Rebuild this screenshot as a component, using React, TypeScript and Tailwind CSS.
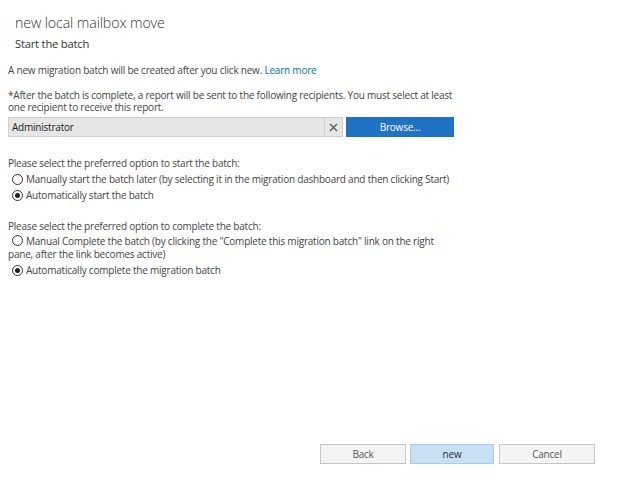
import React from "react";

const font = { fontFamily: '"Open Sans", "Noto Sans", sans-serif' };

function Radio({ checked }: { checked: boolean }) {
    return (
        <span className="inline-flex h-[11px] w-[11px] shrink-0 items-center justify-center rounded-full border border-[#333] bg-white">
            {checked && <span className="h-[5px] w-[5px] rounded-full bg-[#222]"/>}
        </span>
    );
}

export default function App() {
    return (
        <div style={font} className="flex h-[482px] w-[619px] flex-col bg-white text-[10px] tracking-[-0.22px] text-[#444]">
            {/* Header */}
            <div className="px-[15px] pt-[12px]">
                <div className="text-[14.2px] font-light leading-[22px] tracking-[-0.1px] text-[#333]">new local mailbox move</div>
                <div className="mt-[1px] text-[11.2px] leading-[18px] tracking-[-0.2px] text-[#333]">Start the batch</div>
            </div>

            <div className="px-[8px] pt-[10px]">
                <p className="leading-[14px]">
                    A new migration batch will be created after you click new.{" "}
                    <span className="text-[#0072c6]">Learn more</span>
                </p>

                <p className="mt-[12px] w-[445px] leading-[12px]">
                    *After the batch is complete, a report will be sent to the following recipients. You must select at least one recipient to receive this report.
                </p>

                {/* Recipient picker */}
                <div className="mt-[4px] flex h-[20px] items-stretch">
                    <div className="flex w-[335px] items-stretch border border-[#cfcfcf] bg-[#e6e6e6]">
                        <span className="flex flex-1 items-center pl-[3px] text-[#222]">Administrator</span>
                        <span className="flex w-[18px] items-center justify-center border-l border-[#cfcfcf] text-[#555]">
                            <svg width="9" height="9" viewBox="0 0 9 9">
                                <path d="M1 1L8 8M8 1L1 8" stroke="#555" strokeWidth="1.3"/>
                            </svg>
                        </span>
                    </div>
                    <button className="ml-[3px] w-[108px] bg-[#2072c4] text-white">Browse...</button>
                </div>

                {/* Start options */}
                <p className="mt-[19px] leading-[14px]">Please select the preferred option to start the batch:</p>
                <div className="mt-[2px] flex items-center gap-[3px] pl-[4px] leading-[15px]">
                    <Radio checked={false}/>
                    <span>Manually start the batch later (by selecting it in the migration dashboard and then clicking Start)</span>
                </div>
                <div className="mt-[1px] flex items-center gap-[3px] pl-[4px] leading-[15px]">
                    <Radio checked={true}/>
                    <span>Automatically start the batch</span>
                </div>

                {/* Complete options */}
                <p className="mt-[16px] leading-[14px]">Please select the preferred option to complete the batch:</p>
                <p className="mt-[1px] w-[450px] leading-[13px]">
                    <span className="mr-[3px] inline-block translate-y-[1px] pl-[4px]"><Radio checked={false}/></span>
                    Manual Complete the batch (by clicking the "Complete this migration batch" link on the right pane, after the link becomes active)
                </p>
                <div className="mt-[2px] flex items-center gap-[3px] pl-[4px] leading-[15px]">
                    <Radio checked={true}/>
                    <span>Automatically complete the migration batch</span>
                </div>
            </div>

            {/* Footer buttons */}
            <div className="mt-auto flex gap-[4px] pb-[18px] pl-[320px]">
                <button className="h-[20px] w-[86px] border border-[#c6c6c6] bg-[#f4f4f4] text-[#555]">Back</button>
                <button className="h-[20px] w-[84px] border border-[#a8cde9] bg-[#c7e0f4] text-[#333]">new</button>
                <button className="ml-[1px] h-[20px] w-[96px] border border-[#c6c6c6] bg-[#f4f4f4] text-[#555]">Cancel</button>
            </div>
        </div>
    );
}
